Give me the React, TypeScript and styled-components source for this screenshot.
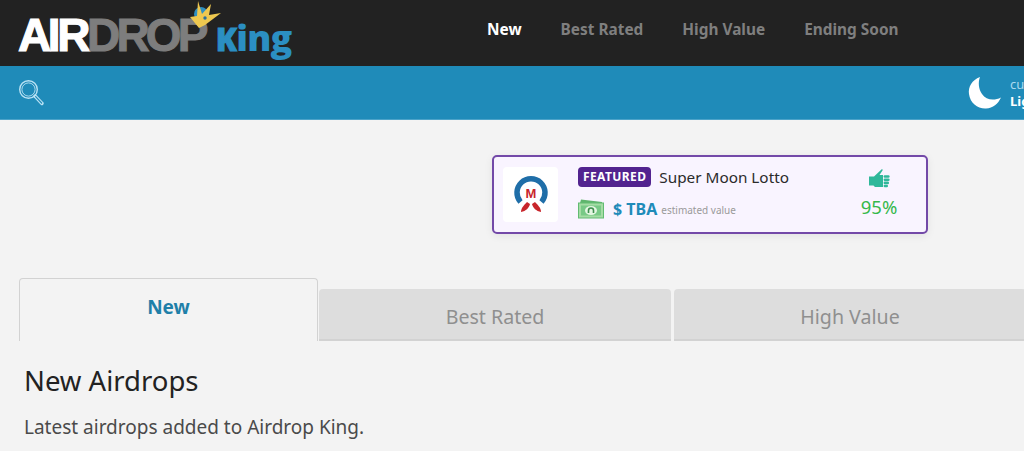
import styled, { createGlobalStyle } from "styled-components";

const GlobalStyle = createGlobalStyle`
  html, body {
    margin: 0;
    padding: 0;
    height: 100%;
    overflow: hidden;
    background: #f3f3f3;
    font-family: "Noto Sans", "Open Sans", sans-serif;
  }
  * { box-sizing: border-box; }
`;

const NAV_ITEMS = ["New", "Best Rated", "High Value", "Ending Soon"];

const Crown = () => (
  <CrownSvg viewBox="0 0 34 30">
    <circle cx="13" cy="13" r="7" fill="#2f8fc0" />
    <path
      d="M10 0 L14 13 L23 3 L21 14 L33 12 L17 24 L11 27 L2 16 L9 15 Z"
      fill="#eec84f"
    />
    <circle cx="17" cy="17" r="1.7" fill="#2a6f9c" />
  </CrownSvg>
);

const SearchIcon = () => (
  <SearchSvg width="27" height="27" viewBox="0 0 27 27" fill="none" stroke="#b9e2f4">
    <circle cx="10.5" cy="10.5" r="8.8" strokeWidth="1.4" />
    <circle cx="10.5" cy="10.5" r="6.6" strokeWidth="0.9" />
    <path d="M17 17 L24 24.5" strokeWidth="3.4" strokeLinecap="round" />
    <path d="M17.6 17.6 L23.6 24" stroke="#1f8bb9" strokeWidth="1.2" strokeLinecap="round" />
  </SearchSvg>
);

const MoonIcon = () => (
  <svg width="34" height="34" viewBox="0 0 34 34">
    <path
      d="M12 1 C4 4 0 11 1 18 C2 27 10 33 18 32.5 C25 32 30 28 33 21.5 C26 25 18 24 14 18 C10.5 13 10 6 12 1 Z"
      fill="#fff"
    />
  </svg>
);

const LottoLogo = () => (
  <svg width="38" height="42" viewBox="0 0 38 42">
    <path
      d="M8.5 28 A14 14 0 1 1 29.5 28"
      fill="none"
      stroke="#1f6ea8"
      strokeWidth="5.5"
    />
    <text
      x="19"
      y="23.5"
      textAnchor="middle"
      fontFamily="Liberation Sans, sans-serif"
      fontWeight="700"
      fontSize="13"
      fill="#c8252b"
    >
      M
    </text>
    <path d="M9 38 C9 34 12 31 15 28 L18 30 C17 34 14 37 9 38 Z" fill="#c8252b" />
    <path d="M29 38 C29 34 26 31 23 28 L20 30 C21 34 24 37 29 38 Z" fill="#c8252b" />
  </svg>
);

const MoneyIcon = () => (
  <svg width="26" height="20" viewBox="0 0 26 20">
    <path d="M2 4 L3 0.5 L24 3 L24 6 Z" fill="#5fb56d" />
    <rect x="0.5" y="4" width="25" height="15" fill="#a5dca5" stroke="#62bb72" />
    <rect x="3" y="6.5" width="20" height="10" fill="#78c986" />
    <ellipse cx="13" cy="11.5" rx="6" ry="4.6" fill="#e4f6e2" />
    <path d="M10.5 14 V11.5 A2.5 2.5 0 0 1 15.5 11.5 V14" fill="none" stroke="#3d8f4e" strokeWidth="1.6" />
  </svg>
);

const ThumbIcon = () => (
  <svg width="21" height="20" viewBox="0 0 21 20">
    <path
      d="M0 7.5 H5 L13 0 L13.8 1 L10.5 6 H14 V18 H6 L4.5 16.5 H0 Z"
      fill="#2fb89a"
    />
    <rect x="14.6" y="6.2" width="6" height="2.6" rx="1.2" fill="#2fb89a" />
    <rect x="14.6" y="9.4" width="6" height="2.6" rx="1.2" fill="#2fb89a" />
    <rect x="14.6" y="12.6" width="5.4" height="2.6" rx="1.2" fill="#2fb89a" />
    <rect x="14.6" y="15.8" width="4.4" height="2.4" rx="1.2" fill="#2fb89a" />
  </svg>
);

export default function App() {
  return (
    <Page>
      <GlobalStyle />
      <TopBar>
        <Logo>
          <LogoWhite>AIR</LogoWhite>
          <LogoGrey>
            DROP
            <Crown />
          </LogoGrey>
          <LogoKing>
            <KingCap>k</KingCap>ing
          </LogoKing>
        </Logo>
        <Nav>
          {NAV_ITEMS.map((item, i) => (
            <NavLink key={item} $active={i === 0}>
              {item}
            </NavLink>
          ))}
        </Nav>
      </TopBar>

      <SearchBar>
        <SearchIcon />
        <ThemeToggle>
          <MoonIcon />
          <ThemeText>
            <ThemeLabel>current</ThemeLabel>
            <ThemeValue>Light</ThemeValue>
          </ThemeText>
        </ThemeToggle>
      </SearchBar>

      <FeaturedRow>
        <FeaturedCard>
          <LogoTile>
            <LottoLogo />
          </LogoTile>
          <FeaturedInfo>
            <TitleRow>
              <Badge>FEATURED</Badge>
              <FeaturedName>Super Moon Lotto</FeaturedName>
            </TitleRow>
            <ValueRow>
              <MoneyIcon />
              <Value>$ TBA</Value>
              <ValueNote>estimated value</ValueNote>
            </ValueRow>
          </FeaturedInfo>
          <Rating>
            <ThumbIcon />
            <Percent>95%</Percent>
          </Rating>
        </FeaturedCard>
      </FeaturedRow>

      <Tabs>
        <Tab $active $width={299}>New</Tab>
        <Tab $width={352}>Best Rated</Tab>
        <Tab $width={352}>High Value</Tab>
      </Tabs>

      <Content>
        <Heading>New Airdrops</Heading>
        <Intro>Latest airdrops added to Airdrop King.</Intro>
      </Content>
    </Page>
  );
}

const Page = styled.div`
  width: 1024px;
  height: 451px;
  overflow: hidden;
  background: #f3f3f3;
`;

const TopBar = styled.header`
  height: 66px;
  background: #222222;
  display: flex;
  align-items: flex-start;
  padding-left: 18px;
`;

const Logo = styled.div`
  width: 469px;
  display: flex;
  align-items: baseline;
  height: 66px;
  padding-top: 10px;
  font-family: "Liberation Sans", Arial, sans-serif;
  font-weight: 700;
`;

const LogoWhite = styled.span`
  font-size: 46px;
  line-height: 50px;
  letter-spacing: -3.4px;
  color: #ffffff;
  -webkit-text-stroke: 1.2px #ffffff;
`;

const LogoGrey = styled.span`
  position: relative;
  font-size: 46px;
  line-height: 50px;
  letter-spacing: -3.8px;
  color: #7d7d7d;
  -webkit-text-stroke: 1px #7d7d7d;
`;

const CrownSvg = styled.svg`
  position: absolute;
  right: -17px;
  top: -10px;
  width: 34px;
  height: 32px;
`;

const LogoKing = styled.span`
  margin-left: 11px;
  font-family: "Open Sans", sans-serif;
  font-size: 36px;
  line-height: 50px;
  font-weight: 800;
  letter-spacing: -0.8px;
  color: #2b8fc2;
`;

const KingCap = styled.span`
  font-size: 31px;
  text-transform: uppercase;
  -webkit-text-stroke: 0.8px #2b8fc2;
`;

const Nav = styled.nav`
  display: flex;
  gap: 39px;
  padding-top: 19px;
`;

const NavLink = styled.a<{ $active?: boolean }>`
  font-family: "Noto Sans", sans-serif;
  font-size: 15.4px;
  line-height: 22px;
  font-weight: 700;
  color: ${(props) => (props.$active ? "#ffffff" : "#7f7f7f")};
`;

const SearchBar = styled.div`
  height: 54px;
  background: #1f8bb9;
  border-bottom: 1px solid #4ba3c9;
  display: flex;
  align-items: center;
  padding-left: 18px;
`;

const SearchSvg = styled.svg`
  flex-shrink: 0;
`;

const ThemeToggle = styled.div`
  margin-left: 923px;
  display: flex;
  align-items: center;
  flex-shrink: 0;
  gap: 8px;
`;

const ThemeText = styled.div`
  display: flex;
  flex-direction: column;
  font-size: 13px;
  line-height: 17px;
`;

const ThemeLabel = styled.span`
  color: #a9d9ee;
`;

const ThemeValue = styled.span`
  color: #ffffff;
  font-weight: 700;
`;

const FeaturedRow = styled.div`
  padding: 35px 0 0 492px;
`;

const FeaturedCard = styled.div`
  width: 436px;
  height: 79px;
  background: #f9f4ff;
  border: 2px solid #7349a8;
  border-radius: 5px;
  box-shadow: 0 2px 8px rgba(0, 0, 0, 0.07);
  display: flex;
  align-items: center;
  padding-left: 9px;
`;

const LogoTile = styled.div`
  width: 55px;
  height: 55px;
  background: #ffffff;
  border-radius: 4px;
  display: flex;
  align-items: center;
  justify-content: center;
`;

const FeaturedInfo = styled.div`
  margin-left: 20px;
  width: 258px;
  display: flex;
  flex-direction: column;
  gap: 10px;
  margin-top: -2px;
`;

const TitleRow = styled.div`
  display: flex;
  align-items: center;
  gap: 8px;
`;

const Badge = styled.span`
  background: #52238f;
  color: #ffffff;
  border-radius: 4px;
  font-size: 12px;
  line-height: 20px;
  font-weight: 700;
  padding: 0 5px;
  letter-spacing: 0.4px;
`;

const FeaturedName = styled.span`
  font-size: 15.3px;
  line-height: 18px;
  color: #2b2b2b;
`;

const ValueRow = styled.div`
  display: flex;
  align-items: center;
`;

const Value = styled.span`
  margin-left: 9px;
  font-size: 16px;
  line-height: 22px;
  font-weight: 700;
  color: #1f8bb9;
`;

const ValueNote = styled.span`
  margin-left: 4px;
  font-size: 10px;
  line-height: 22px;
  padding-top: 2px;
  color: #9a9a9a;
`;

const Rating = styled.div`
  margin-left: 10px;
  width: 66px;
  display: flex;
  flex-direction: column;
  align-items: center;
  gap: 6px;
  margin-top: -2px;
`;

const Percent = styled.span`
  font-size: 18.5px;
  line-height: 24px;
  color: #35b84b;
`;

const Tabs = styled.div`
  margin-top: 44px;
  padding-left: 19px;
  display: flex;
  align-items: flex-end;
  gap: 1px;
  width: 1100px;
`;

const Tab = styled.div<{ $active?: boolean; $width: number }>`
  flex: 0 0 ${(props) => props.$width}px;
  height: ${(props) => (props.$active ? "63px" : "52px")};
  display: flex;
  align-items: center;
  justify-content: center;
  font-size: ${(props) => (props.$active ? "19px" : "19.6px")};
  border-radius: 4px 4px 0 0;
  font-weight: ${(props) => (props.$active ? 700 : 400)};
  color: ${(props) => (props.$active ? "#1f7fa8" : "#8f8f8f")};
  background: ${(props) => (props.$active ? "#f3f3f3" : "#dddddd")};
  border: 1px solid #d2d2d2;
  border-width: ${(props) => (props.$active ? "1px 1px 0 1px" : "0 0 2px 0")};
  padding: ${(props) => (props.$active ? "0 0 6px" : "4px 0 0")};
  &:last-child {
    margin-left: 2px;
  }
`;

const Content = styled.main`
  padding: 20px 0 0 24px;
`;

const Heading = styled.h2`
  margin: 0;
  font-size: 27.5px;
  line-height: 40px;
  font-weight: 400;
  color: #222222;
`;

const Intro = styled.p`
  margin: 11px 0 0;
  font-size: 19px;
  line-height: 30px;
  color: #4a4a4a;
`;
